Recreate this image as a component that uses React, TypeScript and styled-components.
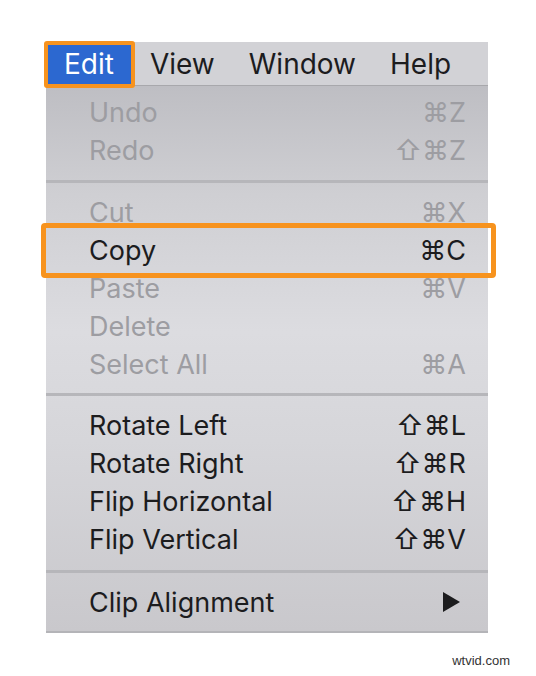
import React from "react";
import styled, { createGlobalStyle } from "styled-components";

const Global = createGlobalStyle`
  html, body { margin: 0; padding: 0; background: #ffffff; }
  body { font-family: "Inter", "Noto Sans", "DejaVu Sans", sans-serif; }
`;

const Page = styled.div`
  width: 536px;
  height: 676px;
  padding: 42px 0 0 46px;
  box-sizing: border-box;
  position: relative;
`;

const Panel = styled.div`
  width: 442px;
  display: flex;
  flex-direction: column;
`;

const MenuBar = styled.div`
  height: 44px;
  display: flex;
  align-items: stretch;
  background: #d2d2d6;
  border-bottom: 1px solid #a8a8ac;
  box-sizing: border-box;
`;

const Title = styled.div<{ $active?: boolean }>`
  position: relative;
  display: flex;
  align-items: center;
  padding: ${(p) => (p.$active ? "0 19px 0 18px" : "0 17px")};
  font-size: 28px;
  color: ${(p) => (p.$active ? "#ffffff" : "#1c1c1e")};
  background: ${(p) => (p.$active ? "#2c68d0" : "transparent")};
  ${(p) =>
    p.$active &&
    `
    &::after {
      content: "";
      position: absolute;
      left: -2px;
      right: -2px;
      top: -1px;
      bottom: -3px;
      border: 4px solid #f7931e;
      border-radius: 3px;
    }
  `}
`;

const Dropdown = styled.div`
  background: linear-gradient(
    180deg,
    #bebec3 0%,
    #cfcfd3 20%,
    #dcdce0 45%,
    #d6d6da 65%,
    #c9c8cc 100%
  );
  display: flex;
  flex-direction: column;
  border-bottom: 2px solid #b4b4b8;
`;

const Section = styled.div<{ $top?: number; $bottom?: number }>`
  padding: ${(p) => p.$top ?? 10}px 0 ${(p) => p.$bottom ?? 10}px;
  display: flex;
  flex-direction: column;
`;

const Separator = styled.div`
  height: 3px;
  background: #b6b6ba;
`;

const Row = styled.div<{ $enabled?: boolean; $highlight?: boolean }>`
  position: relative;
  height: 38px;
  display: flex;
  align-items: center;
  justify-content: space-between;
  padding: 0 22px 0 43px;
  font-size: 27px;
  color: ${(p) => (p.$enabled ? "#1c1c1e" : "#9d9da2")};
  ${(p) =>
    p.$highlight &&
    `
    &::after {
      content: "";
      position: absolute;
      left: -5px;
      right: -8px;
      top: -8px;
      bottom: -9px;
      border: 5px solid #f7931e;
      border-radius: 4px;
    }
  `}
`;

const Shortcut = styled.span`
  font-family: "Inter", "DejaVu Sans", sans-serif;
  font-size: 27px;
  display: flex;
  align-items: center;
  gap: 2px;
`;

const SubArrow = styled.svg`
  width: 17px;
  height: 20px;
  margin-right: 6px;
  display: block;
`;

const Watermark = styled.div`
  position: absolute;
  right: 26px;
  bottom: 8px;
  font-family: "Liberation Sans", Arial, sans-serif;
  font-size: 13px;
  color: #333;
`;

type Item = { label: string; key?: string; enabled?: boolean; highlight?: boolean; sub?: boolean };

const sections: { top: number; bottom: number; items: Item[] }[] = [
  {
    top: 7,
    bottom: 11,
    items: [
      { label: "Undo", key: "⌘Z" },
      { label: "Redo", key: "⇧⌘Z" },
    ],
  },
  {
    top: 10,
    bottom: 10,
    items: [
      { label: "Cut", key: "⌘X" },
      { label: "Copy", key: "⌘C", enabled: true, highlight: true },
      { label: "Paste", key: "⌘V" },
      { label: "Delete" },
      { label: "Select All", key: "⌘A" },
    ],
  },
  {
    top: 10,
    bottom: 12,
    items: [
      { label: "Rotate Left", key: "⇧⌘L", enabled: true },
      { label: "Rotate Right", key: "⇧⌘R", enabled: true },
      { label: "Flip Horizontal", key: "⇧⌘H", enabled: true },
      { label: "Flip Vertical", key: "⇧⌘V", enabled: true },
    ],
  },
  {
    top: 10,
    bottom: 10,
    items: [{ label: "Clip Alignment", enabled: true, sub: true }],
  },
];

export default function App() {
  return (
    <Page>
      <Global />
      <Panel>
        <MenuBar>
          <Title $active>Edit</Title>
          <Title>View</Title>
          <Title>Window</Title>
          <Title>Help</Title>
        </MenuBar>
        <Dropdown>
          {sections.map((s, i) => (
            <React.Fragment key={i}>
              {i > 0 && <Separator />}
              <Section $top={s.top} $bottom={s.bottom}>
                {s.items.map((it) => (
                  <Row key={it.label} $enabled={it.enabled} $highlight={it.highlight}>
                    <span>{it.label}</span>
                    {it.key && <Shortcut>{it.key}</Shortcut>}
                    {it.sub && (
                      <SubArrow viewBox="0 0 17 20">
                        <polygon points="0,0 17,10 0,20" fill="#1c1c1e" />
                      </SubArrow>
                    )}
                  </Row>
                ))}
              </Section>
            </React.Fragment>
          ))}
        </Dropdown>
      </Panel>
      <Watermark>wtvid.com</Watermark>
    </Page>
  );
}
